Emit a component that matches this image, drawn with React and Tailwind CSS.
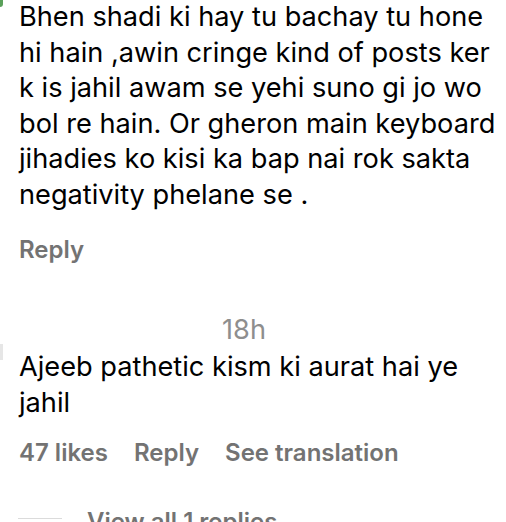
import React from 'react';

const comments = [
  {
    id: 1,
    text: 'Bhen shadi ki hay tu bachay tu hone hi hain ,awin cringe kind of posts ker k is jahil awam se yehi suno gi jo wo bol re hain. Or gheron main keyboard jihadies ko kisi ka bap nai rok sakta negativity phelane se .',
  },
];

const App = () => {
  return (
    <div
      className="relative w-[506px] h-[522px] overflow-hidden bg-white text-black"
      style={{ fontFamily: 'Inter, "Noto Sans", sans-serif' }}
    >
      {/* avatar edges cut off at the left */}
      <div className="absolute left-0 top-0 w-[3px] h-[7px] bg-[#5aa05a] rounded-br-sm" />
      <div className="absolute left-0 top-[344px] w-[3px] h-[16px] bg-[#e6e6e6]" />

      <div className="pl-[19px] w-[500px]">
        {/* first comment */}
        {comments.map((c) => (
          <p key={c.id} className="-mt-px text-[27.2px] leading-[35.5px]">
            {c.text}
          </p>
        ))}
        <div className="mt-[20px] text-[24px] leading-[36px] font-semibold text-[#737373]">
          Reply
        </div>

        {/* second comment */}
        <div className="mt-[44px] pl-[203px] text-[27.2px] leading-[36px] text-[#8e8e8e]">
          18h
        </div>
        <p className="mt-px text-[27.2px] leading-[35.5px]">
          Ajeeb pathetic kism ki aurat hai ye jahil
        </p>
        <div className="mt-[15px] flex gap-[26px] text-[24px] leading-[36px] font-semibold text-[#737373]">
          <span>47 likes</span>
          <span>Reply</span>
          <span>See translation</span>
        </div>

        {/* replies toggle */}
        <div className="mt-[33px] flex gap-[25px] text-[24px] leading-[36px] font-semibold text-[#737373]">
          <div className="self-start mt-[14px] -ml-px w-[44px] h-px bg-[#dbdbdb]" />
          <span>View all 1 replies</span>
        </div>
      </div>
    </div>
  );
};

export default App;
